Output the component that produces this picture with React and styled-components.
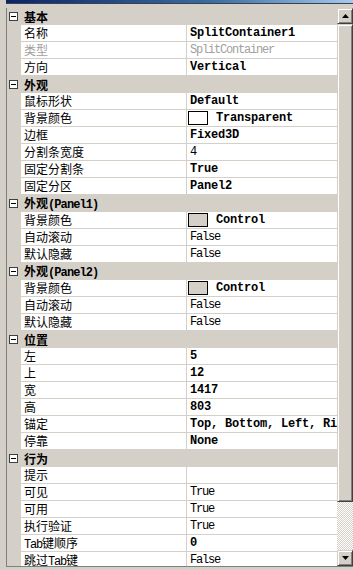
import styled, { createGlobalStyle } from "styled-components";

const GlobalStyle = createGlobalStyle`
  html, body {
    margin: 0;
    padding: 0;
    overflow: hidden;
    background: #d4d0c8;
  }
`;

const sections = [
  {
    title: "基本",
    rows: [
      { name: "名称", value: "SplitContainer1", bold: true },
      { name: "类型", value: "SplitContainer", disabled: true },
      { name: "方向", value: "Vertical", bold: true },
    ],
  },
  {
    title: "外观",
    rows: [
      { name: "鼠标形状", value: "Default", bold: true },
      { name: "背景颜色", value: "Transparent", bold: true, swatch: "#ffffff" },
      { name: "边框", value: "Fixed3D", bold: true },
      { name: "分割条宽度", value: "4" },
      { name: "固定分割条", value: "True", bold: true },
      { name: "固定分区", value: "Panel2", bold: true },
    ],
  },
  {
    title: "外观",
    latin: "(Panel1)",
    rows: [
      { name: "背景颜色", value: "Control", bold: true, swatch: "#d4d0c8" },
      { name: "自动滚动", value: "False" },
      { name: "默认隐藏", value: "False" },
    ],
  },
  {
    title: "外观",
    latin: "(Panel2)",
    rows: [
      { name: "背景颜色", value: "Control", bold: true, swatch: "#d4d0c8" },
      { name: "自动滚动", value: "False" },
      { name: "默认隐藏", value: "False" },
    ],
  },
  {
    title: "位置",
    rows: [
      { name: "左", value: "5", bold: true },
      { name: "上", value: "12", bold: true },
      { name: "宽", value: "1417", bold: true },
      { name: "高", value: "803", bold: true },
      { name: "锚定", value: "Top, Bottom, Left, Right", bold: true },
      { name: "停靠", value: "None", bold: true },
    ],
  },
  {
    title: "行为",
    rows: [
      { name: "提示", value: "" },
      { name: "可见", value: "True" },
      { name: "可用", value: "True" },
      { name: "执行验证", value: "True" },
      { name: ["Tab", "键顺序"], value: "0", bold: true },
      { name: ["跳过", "Tab", "键"], value: "False" },
    ],
  },
];

function Name({ text }) {
  if (typeof text === "string") return text;
  return text.map((part, i) =>
    /^[A-Za-z]+$/.test(part) ? <Lat key={i}>{part}</Lat> : <span key={i}>{part}</span>
  );
}

export default function App() {
  return (
    <>
      <GlobalStyle />
      <Frame>
        <TitleStrip />
        <Main>
          <LeftEdge />
          <Grid>
            {sections.map((sec, si) => (
              <div key={si}>
                <Category>
                  <Toggle>
                    <Minus />
                  </Toggle>
                  <CatLabel>
                    {sec.title}
                    {sec.latin && <CatLatin>{sec.latin}</CatLatin>}
                  </CatLabel>
                </Category>
                {sec.rows.map((row, ri) => (
                  <Row key={ri}>
                    <Gutter />
                    <NameCell $disabled={row.disabled}>
                      <Name text={row.name} />
                    </NameCell>
                    <ValueCell>
                      {row.swatch && <Swatch $color={row.swatch} />}
                      <Value $bold={row.bold} $disabled={row.disabled}>
                        {row.value}
                      </Value>
                    </ValueCell>
                  </Row>
                ))}
              </div>
            ))}
          </Grid>
          <ScrollBar>
            <ArrowButton>
              <svg width="7" height="4" viewBox="0 0 7 4">
                <path d="M3.5 0 L7 4 L0 4 Z" fill="#000" />
              </svg>
            </ArrowButton>
            <Thumb />
            <Track />
            <ArrowButton>
              <svg width="7" height="4" viewBox="0 0 7 4">
                <path d="M0 0 L7 0 L3.5 4 Z" fill="#000" />
              </svg>
            </ArrowButton>
          </ScrollBar>
        </Main>
        <BottomEdge />
      </Frame>
    </>
  );
}

const Frame = styled.div`
  width: 353px;
  height: 570px;
  display: flex;
  flex-direction: column;
  background: #d4d0c8;
  overflow: hidden;
`;

const TitleStrip = styled.div`
  height: 3px;
  margin-left: 6px;
  border-bottom: 1px solid #404040;
  background: linear-gradient(to right, #0a246a, #3a6ea5 60%, #a6caf0);
`;

const Main = styled.div`
  display: flex;
  height: 558px;
  margin-top: 4px;
`;

const LeftEdge = styled.div`
  width: 6px;
  flex-shrink: 0;
`;

const Grid = styled.div`
  width: 330px;
  flex-shrink: 0;
  border-left: 1px solid #808080;
  overflow: hidden;
  font-family: "Noto Sans CJK SC", "Liberation Sans", sans-serif;
  font-size: 12px;
  color: #000;
`;

const Category = styled.div`
  display: flex;
  align-items: center;
  height: 17px;
  background: #d4d0c8;
`;

const Toggle = styled.div`
  width: 7px;
  height: 7px;
  margin-left: 2px;
  border: 1px solid #404040;
  background: #fff;
  display: flex;
  align-items: center;
  justify-content: center;
`;

const Minus = styled.div`
  width: 5px;
  height: 1px;
  background: #000;
`;

const CatLabel = styled.div`
  margin-left: 6px;
  font-weight: bold;
  line-height: 16px;
  white-space: nowrap;
`;

const CatLatin = styled.span`
  font-family: "Liberation Mono", monospace;
  letter-spacing: -0.9px;
`;

const Row = styled.div`
  display: flex;
  height: 17px;
`;

const Gutter = styled.div`
  width: 14px;
  flex-shrink: 0;
  background: #d4d0c8;
`;

const NameCell = styled.div`
  width: 162px;
  flex-shrink: 0;
  padding-left: 3px;
  height: 16px;
  line-height: 16px;
  background: #fff;
  border-bottom: 1px solid #d4d0c8;
  white-space: nowrap;
  overflow: hidden;
  color: ${(p) => (p.$disabled ? "#a0a0a0" : "#000")};
`;

const Lat = styled.span`
  font-family: "Liberation Mono", monospace;
  letter-spacing: -1.2px;
`;

const ValueCell = styled.div`
  flex: 1;
  display: flex;
  align-items: center;
  height: 16px;
  border-left: 1px solid #d4d0c8;
  border-bottom: 1px solid #d4d0c8;
  background: #fff;
  overflow: hidden;
  white-space: nowrap;
`;

const Swatch = styled.div`
  width: 18px;
  height: 12px;
  flex-shrink: 0;
  margin-left: 1px;
  margin-right: 8px;
  border: 1px solid #000;
  background: ${(p) => p.$color};
`;

const Value = styled.span`
  padding-left: 3px;
  font-family: "Liberation Mono", monospace;
  font-size: 12px;
  line-height: 16px;
  font-weight: ${(p) => (p.$bold ? "bold" : "normal")};
  letter-spacing: ${(p) => (p.$bold ? "-0.2px" : "-1.2px")};
  color: ${(p) => (p.$disabled ? "#a0a0a0" : "#000")};
  ${Swatch} + & {
    padding-left: 0;
  }
`;

const ScrollBar = styled.div`
  width: 16px;
  flex-shrink: 0;
  display: flex;
  flex-direction: column;
`;

const raised = `
  box-sizing: border-box;
  background: #d4d0c8;
  border-top: 1px solid #d4d0c8;
  border-left: 1px solid #d4d0c8;
  border-right: 1px solid #404040;
  border-bottom: 1px solid #404040;
  box-shadow: inset 1px 1px 0 #fff, inset -1px -1px 0 #808080;
`;

const ArrowButton = styled.div`
  ${raised}
  height: 16px;
  display: flex;
  align-items: center;
  justify-content: center;
`;

const Thumb = styled.div`
  ${raised}
  height: 478px;
`;

const Track = styled.div`
  flex: 1;
  background-image: repeating-conic-gradient(#ffffff 0 25%, #d4d0c8 0 50%);
  background-size: 2px 2px;
`;

const BottomEdge = styled.div`
  flex: 1;
  border-top: 1px solid #808080;
  margin-left: 6px;
`;
